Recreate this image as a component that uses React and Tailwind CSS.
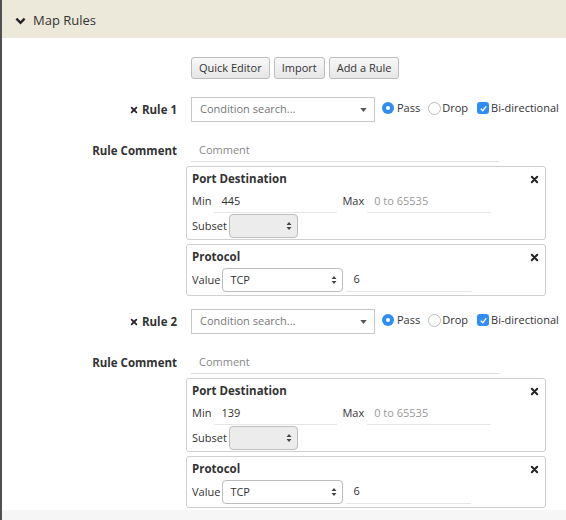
import React from "react";

const font = { fontFamily: '"Open Sans", "Noto Sans", sans-serif' };

function Times({ className = "" }) {
  return (
    <svg viewBox="0 0 10 10" className={className}>
      <path d="M2 2 L8 8 M8 2 L2 8" stroke="#222" strokeWidth="2.2" strokeLinecap="round" />
    </svg>
  );
}

function Arrows() {
  return (
    <svg viewBox="0 0 6 10" className="w-[6px] h-[10px]">
      <path d="M3 1 L5.5 4 H0.5 Z M3 9 L5.5 6 H0.5 Z" fill="#444" />
    </svg>
  );
}

function UnderlineInput({ value, placeholder, width }) {
  return (
    <div className={`${width} h-full flex items-center border-b border-[#e6e6e6] pl-[7px]`}>
      {value ? (
        <span className="text-[#333]">{value}</span>
      ) : (
        <span className="text-[#999]">{placeholder}</span>
      )}
    </div>
  );
}

function Condition({ title, children }) {
  return (
    <div className="relative border border-[#cfcfcf] rounded-[3px] pt-[3px] px-[5px] pb-[1px]">
      <div className="h-[18px] leading-[18px] font-bold text-[#333] text-[11.5px]">{title}</div>
      <button className="absolute right-[6px] top-[8px]">
        <Times className="w-[9px] h-[9px]" />
      </button>
      {children}
    </div>
  );
}

function Rule({ n, min }) {
  return (
    <div>
      <div className="flex items-center h-[25px]">
        <div className="w-[175px] flex justify-end items-center gap-[4px] font-bold text-[#333] text-[11.5px]">
          <Times className="w-[8px] h-[8px]" />
          <span>Rule {n}</span>
        </div>
        <div className="ml-[14px] w-[184px] h-[25px] border border-[#c8c8c8] flex items-center justify-between pl-[8px] pr-[7px] text-[#777]">
          <span>Condition search...</span>
          <svg viewBox="0 0 8 5" className="w-[7px] h-[4px]">
            <path d="M0 0 H8 L4 5 Z" fill="#555" />
          </svg>
        </div>
        <div className="flex items-center ml-[7px] -mt-[3px] whitespace-nowrap">
          <span className="w-[12px] h-[12px] rounded-full bg-[#2f8ef5] flex items-center justify-center">
            <span className="w-[4px] h-[4px] rounded-full bg-white" />
          </span>
          <span className="ml-[3px] text-[#333]">Pass</span>
          <span className="ml-[8px] w-[13px] h-[13px] rounded-full border border-[#bdbdbd] bg-white" />
          <span className="ml-[1px] text-[#333]">Drop</span>
          <span className="ml-[9px] w-[12px] h-[12px] rounded-[3px] bg-[#2f8ef5] flex items-center justify-center">
            <svg viewBox="0 0 10 10" className="w-[9px] h-[9px]">
              <path d="M2 5.2 L4.2 7.4 L8 2.6" stroke="white" strokeWidth="1.5" fill="none" />
            </svg>
          </span>
          <span className="ml-[2px] text-[#333]">Bi-directional</span>
        </div>
      </div>

      <div className="flex items-center h-[22px] mt-[18px]">
        <div className="w-[175px] text-right font-bold text-[#333] text-[11.5px]">Rule Comment</div>
        <div className="ml-[14px] w-[308px] h-full flex items-center border-b border-[#dcdcdc] pl-[8px] text-[#888]">
          Comment
        </div>
      </div>

      <div className="ml-[184px] w-[360px] mt-[4px] flex flex-col gap-[4px]">
        <Condition title="Port Destination">
          <div className="flex items-center h-[23px] mt-[2px]">
            <span className="text-[#333]">Min</span>
            <div className="ml-[3px] h-full">
              <UnderlineInput value={min} width="w-[123px]" />
            </div>
            <span className="ml-[5px] text-[#333]">Max</span>
            <div className="ml-[3px] h-full">
              <UnderlineInput placeholder="0 to 65535" width="w-[124px]" />
            </div>
          </div>
          <div className="flex items-center h-[24px] mt-[1px]">
            <span className="text-[#333]">Subset</span>
            <div className="ml-[2px] w-[69px] h-[24px] rounded-[4px] border border-[#bdbdbd] bg-[#ececec] flex items-center justify-end pr-[5px]">
              <Arrows />
            </div>
          </div>
        </Condition>
        <Condition title="Protocol">
          <div className="flex items-center h-[24px] mt-[2px] mb-[2px]">
            <span className="text-[#333]">Value</span>
            <div className="ml-[2px] w-[121px] h-[24px] rounded-[4px] border border-[#bdbdbd] bg-white flex items-center justify-between pl-[7px] pr-[5px] text-[#333]">
              <span>TCP</span>
              <Arrows />
            </div>
            <div className="ml-[3px] h-full">
              <UnderlineInput value="6" width="w-[125px]" />
            </div>
          </div>
        </Condition>
      </div>
    </div>
  );
}

export default function App() {
  return (
    <div style={font} className="w-[566px] h-[520px] overflow-hidden bg-white border-l-2 border-[#505050] text-[11px] flex flex-col">
      <div className="h-[38px] bg-[#ece9da] flex items-center pl-[13px] pt-[3px] text-[13px] text-[#333]">
        <svg viewBox="0 0 12 8" className="w-[11px] h-[8px]">
          <path d="M1.5 1.5 L6 6 L10.5 1.5" stroke="#222" strokeWidth="2.6" fill="none" />
        </svg>
        <span className="ml-[7px]">Map Rules</span>
      </div>
      <div className="pt-[19px] flex-1">
        <div className="flex gap-[4px] ml-[189px]">
          <button className="h-[22px] px-[7px] rounded-[3px] border border-[#bcbcbc] bg-gradient-to-b from-[#f8f8f8] to-[#e6e6e6] text-[#333]">Quick Editor</button>
          <button className="h-[22px] px-[7px] rounded-[3px] border border-[#bcbcbc] bg-gradient-to-b from-[#f8f8f8] to-[#e6e6e6] text-[#333]">Import</button>
          <button className="h-[22px] px-[7px] rounded-[3px] border border-[#bcbcbc] bg-gradient-to-b from-[#f8f8f8] to-[#e6e6e6] text-[#333]">Add a Rule</button>
        </div>
        <div className="mt-[18px] flex flex-col gap-[13px]">
          <Rule n={1} min="445" />
          <Rule n={2} min="139" />
        </div>
      </div>
      <div className="h-[10px] bg-[#f6f6f6]" />
    </div>
  );
}
